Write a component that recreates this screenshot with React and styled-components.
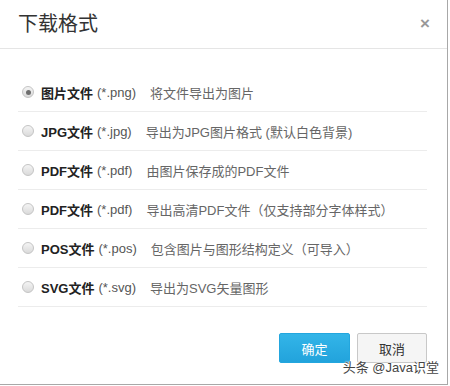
import React, { useState } from 'react';
import styled, { createGlobalStyle } from 'styled-components';

const GlobalStyle = createGlobalStyle`
    body {
        margin: 0;
        background: #fff;
        font-family: "Liberation Sans", "Noto Sans CJK SC", sans-serif;
    }
`;

const Dialog = styled.div`
    position: relative;
    width: 447px;
    height: 384px;
    border-right: 1px solid #a8a8a8;
    border-bottom: 1px solid #a8a8a8;
    background: #fff;
    display: flex;
    flex-direction: column;
`;

const Header = styled.div`
    height: 48px;
    border-bottom: 1px solid #e5e5e5;
    display: flex;
    align-items: center;
    justify-content: space-between;
    padding: 0 18px;
`;

const Title = styled.h3`
    margin: 0;
    font-size: 20px;
    font-weight: normal;
    color: #333;
    line-height: 24px;
`;

const Close = styled.span`
    font-size: 17px;
    font-weight: bold;
    color: #999;
    line-height: 1;
    margin-top: -2px;
    margin-right: -1px;
    cursor: pointer;
`;

const List = styled.div`
    padding: 24px 20px 0 18px;
`;

const Row = styled.label`
    display: flex;
    align-items: center;
    height: 38px;
    border-bottom: 1px solid #ececec;
    font-size: 13px;
    padding-left: 4px;
    cursor: pointer;
`;

const Radio = styled.span`
    width: 10px;
    height: 10px;
    border-radius: 50%;
    border: 1px solid #c4c4c4;
    background: linear-gradient(#f4f4f4, #dadada);
    display: flex;
    align-items: center;
    justify-content: center;
    margin-right: 7px;
    flex-shrink: 0;
    &::after {
        content: '';
        width: 5px;
        height: 5px;
        border-radius: 50%;
        background: ${ (p) => p.checked ? '#6e6e6e' : 'transparent' };
    }
`;

const Name = styled.b`
    color: #222;
    font-weight: bold;
`;

const Ext = styled.span`
    color: #555;
    margin-left: 4px;
    margin-right: 14px;
`;

const Desc = styled.span`
    color: #666;
`;

const Footer = styled.div`
    display: flex;
    justify-content: flex-end;
    gap: 7px;
    padding: 26px 20px 0 0;
`;

const Button = styled.button`
    width: ${ (p) => p.primary ? 71 : 70 }px;
    height: 30px;
    font-size: 13px;
    font-family: inherit;
    border-radius: 2px;
    cursor: pointer;
    color: ${ (p) => p.primary ? '#fff' : '#333' };
    background: ${ (p) => p.primary ? 'linear-gradient(#33b5e8, #22a3dc)' : '#f5f5f5' };
    border: 1px solid ${ (p) => p.primary ? '#23a6de' : '#c8c8c8' };
`;

const Watermark = styled.span`
    position: absolute;
    right: 8px;
    bottom: 8px;
    font-size: 13px;
    color: #444;
    text-shadow: 0 0 2px #fff, 0 0 2px #fff, 0 0 1px #fff;
    pointer-events: none;
`;

const formats = [
    { name: '图片文件', ext: '(*.png)', desc: '将文件导出为图片' },
    { name: 'JPG文件', ext: '(*.jpg)', desc: '导出为JPG图片格式 (默认白色背景)' },
    { name: 'PDF文件', ext: '(*.pdf)', desc: '由图片保存成的PDF文件' },
    { name: 'PDF文件', ext: '(*.pdf)', desc: '导出高清PDF文件（仅支持部分字体样式）' },
    { name: 'POS文件', ext: '(*.pos)', desc: '包含图片与图形结构定义（可导入）' },
    { name: 'SVG文件', ext: '(*.svg)', desc: '导出为SVG矢量图形' },
];

export default function App() {
    const [selected, setSelected] = useState(0);

    return (
        <Dialog>
            <GlobalStyle/>
            <Header>
                <Title>下载格式</Title>
                <Close>×</Close>
            </Header>
            <List>
                { formats.map((item, i) =>
                    <Row key={ i } onClick={ () => setSelected(i) }>
                        <Radio checked={ selected === i }/>
                        <Name>{ item.name }</Name>
                        <Ext>{ item.ext }</Ext>
                        <Desc>{ item.desc }</Desc>
                    </Row>
                ) }
            </List>
            <Footer>
                <Button primary>确定</Button>
                <Button>取消</Button>
            </Footer>
            <Watermark>头条 @Java识堂</Watermark>
        </Dialog>
    );
}
